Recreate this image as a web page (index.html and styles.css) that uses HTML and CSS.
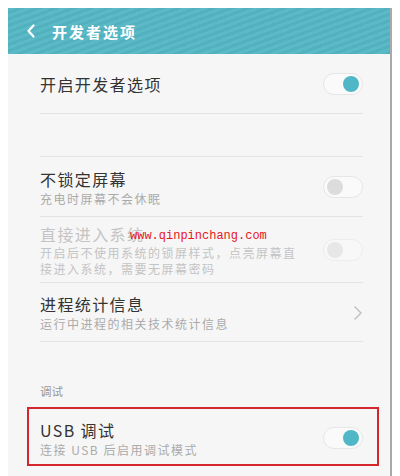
FILE: index.html
```html
<!DOCTYPE html>
<html lang="zh-CN">
<head>
    <meta charset="UTF-8">
    <meta name="viewport" content="width=device-width, initial-scale=1.0">
    <title>开发者选项</title>
    <link rel="stylesheet" href="styles.css">
</head>
<body>

    <div class="phone">
        <div class="header">
            <svg class="back-icon" width="10" height="14" viewBox="0 0 10 14">
                <path d="M7.5 1.5 L2.5 7 L7.5 12.5" fill="none" stroke="#fff" stroke-width="2.2" stroke-linecap="round" stroke-linejoin="round"/>
            </svg>
            <div class="header-title">开发者选项</div>
        </div>

        <div class="row row-main">
            <div class="row-text">
                <div class="row-title">开启开发者选项</div>
            </div>
            <div class="switch on"><div class="knob"></div></div>
        </div>

        <div class="spacer"></div>

        <div class="row row-sleep">
            <div class="row-text">
                <div class="row-title">不锁定屏幕</div>
                <div class="row-sub">充电时屏幕不会休眠</div>
            </div>
            <div class="switch"><div class="knob"></div></div>
        </div>

        <div class="row row-direct disabled">
            <div class="row-text">
                <div class="row-title">直接进入系统</div>
                <div class="row-sub">开启后不使用系统的锁屏样式，点亮屏幕直<br>接进入系统，需要无屏幕密码</div>
            </div>
            <div class="switch"><div class="knob"></div></div>
            <div class="watermark">www.qinpinchang.com</div>
        </div>

        <div class="row row-stats">
            <div class="row-text">
                <div class="row-title">进程统计信息</div>
                <div class="row-sub">运行中进程的相关技术统计信息</div>
            </div>
            <svg class="chevron" width="10" height="16" viewBox="0 0 10 16">
                <path d="M2 2 L8 8 L2 14" fill="none" stroke="#bdbdbd" stroke-width="1.4" stroke-linecap="round" stroke-linejoin="round"/>
            </svg>
        </div>

        <div class="section-label">调试</div>

        <div class="highlight">
            <div class="row row-usb">
                <div class="row-text">
                    <div class="row-title">USB 调试</div>
                    <div class="row-sub">连接 USB 后启用调试模式</div>
                </div>
                <div class="switch on"><div class="knob"></div></div>
            </div>
        </div>
    </div>

</body>
</html>
```

FILE: styles.css
```css
* {
    margin: 0;
    padding: 0;
    box-sizing: border-box;
}

body {
    background-color: #fff;
    width: 400px;
    height: 476px;
    overflow: hidden;
    font-family: "Noto Sans CJK SC", "Liberation Sans", sans-serif;
}

.phone {
    margin: 8px 0 0 8px;
    width: 384px;
    height: 468px;
    background: #f6f6f6;
    border-right: 2px solid #a9a9a9;
    overflow: hidden;
}

.header {
    height: 46px;
    display: flex;
    align-items: center;
    padding-left: 18px;
    background-color: #55b7c5;
    background-image: repeating-linear-gradient(160deg, rgba(255,255,255,0.04) 0 3px, rgba(0,0,0,0.03) 3px 6px);
}

.back-icon {
    margin-right: 16px;
}

.header-title {
    color: #fff;
    font-size: 15px;
    font-weight: bold;
    letter-spacing: 2px;
}

.row {
    display: flex;
    align-items: center;
    justify-content: space-between;
    margin: 0 27px 0 32px;
    border-bottom: 1px solid #e4e4e4;
    position: relative;
}

.row-main {
    height: 60px;
}

.spacer {
    height: 43px;
    margin: 0 27px 0 32px;
    border-bottom: 1px solid #e4e4e4;
}

.row-sleep {
    height: 60px;
    padding-top: 1px;
}

.row-direct {
    height: 66px;
}

.row-stats {
    height: 59px;
    padding-top: 1px;
}

.row-title {
    font-size: 16px;
    line-height: 22px;
    letter-spacing: 1.4px;
    color: #333;
}

.row-sub {
    font-size: 12px;
    line-height: 17px;
    letter-spacing: 1.5px;
    color: #ababab;
}

.disabled .row-title {
    color: #c4c4c4;
}

.disabled .row-sub {
    color: #c4c4c4;
    line-height: 16px;
}

.disabled .switch {
    opacity: 0.55;
}

.switch {
    width: 40px;
    height: 22px;
    border: 1px solid #e6e6e6;
    border-radius: 11px;
    background: #fafafa;
    display: flex;
    align-items: center;
    padding: 0 3px;
    flex-shrink: 0;
}

.switch.on {
    justify-content: flex-end;
}

.knob {
    width: 16px;
    height: 16px;
    border-radius: 50%;
    background: #dcdcdc;
}

.switch.on .knob {
    background: #4fb7c6;
}

.watermark {
    position: absolute;
    left: 90px;
    top: 10px;
    font-family: "Liberation Mono", monospace;
    font-size: 12px;
    line-height: 18px;
    color: #e5161d;
}

.section-label {
    height: 65px;
    padding: 40px 0 0 32px;
    font-size: 11.5px;
    line-height: 18px;
    color: #9a9a9a;
}

.highlight {
    margin: 0 11px 0 19px;
    border: 2px solid #d6262d;
}

.highlight .row {
    margin: 0 14px 0 11px;
    border-bottom: none;
    height: 55px;
    padding-top: 3px;
}
```
